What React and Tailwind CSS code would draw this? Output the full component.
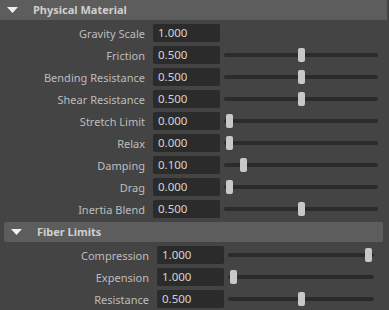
import React from 'react';

const physical = [
  { label: 'Gravity Scale', value: '1.000' },
  { label: 'Friction', value: '0.500', slider: 0.5 },
  { label: 'Bending Resistance', value: '0.500', slider: 0.5 },
  { label: 'Shear Resistance', value: '0.500', slider: 0.5 },
  { label: 'Stretch Limit', value: '0.000', slider: 0 },
  { label: 'Relax', value: '0.000', slider: 0 },
  { label: 'Damping', value: '0.100', slider: 0.1 },
  { label: 'Drag', value: '0.000', slider: 0 },
  { label: 'Inertia Blend', value: '0.500', slider: 0.5 },
];

const fiber = [
  { label: 'Compression', value: '1.000', slider: 1 },
  { label: 'Expension', value: '1.000', slider: 0 },
  { label: 'Resistance', value: '0.500', slider: 0.5 },
];

// Maya-style attribute slider: dark groove with a small pale handle
function Slider({ value }) {
  return (
    <div className="relative flex-1 h-[18px] flex items-center">
      <div className="w-full h-[4px] rounded-full bg-[#2b2b2b]" />
      <div
        className="absolute top-[2px] w-[7px] h-[14px] rounded-[2px] bg-[#c8c8c8]"
        style={{ left: `calc(2px + ${value} * (100% - 11px))` }}
      />
    </div>
  );
}

function Row({ label, value, slider }) {
  return (
    <div className="flex items-center h-[18px]">
      <div className="w-[145px] text-right text-[#bdbdbd] text-[11px] leading-none">{label}</div>
      <div className="ml-[8px] w-[67px] h-[18px] rounded-[2px] bg-[#2b2b2b] flex items-center pl-[5px] text-[11.5px] text-[#d4d4d4]">
        {value}
      </div>
      {slider !== undefined ? (
        <div className="flex-1 flex ml-[4px]">
          <Slider value={slider} />
        </div>
      ) : (
        <div className="flex-1" />
      )}
    </div>
  );
}

function Header({ title, className = '' }) {
  return (
    <div className={`h-[20px] bg-[#5d5d5d] flex items-center ${className}`}>
      <svg width="11" height="6" viewBox="0 0 11 6" className="ml-[7px]">
        <path d="M0 0H11L5.5 6Z" fill="#f0f0f0" />
      </svg>
      <span className="ml-[15px] font-bold text-[11px] text-[#cfcfcf]">{title}</span>
    </div>
  );
}

export default function App() {
  return (
    <div
      className="w-[389px] h-[310px] bg-[#444444] overflow-hidden"
      style={{ fontFamily: '"Noto Sans", "Liberation Sans", sans-serif' }}
    >
      <div className="w-[387px]">
        <Header title="Physical Material" />
        <div className="flex flex-col gap-[4px] pt-[4px] pr-[9px]">
          {physical.map((r) => (
            <Row key={r.label} {...r} />
          ))}
        </div>
        <div className="mx-[4px] mt-[4px]">
          <Header title="Fiber Limits" className="rounded-[2px]" />
          <div className="flex flex-col gap-[4px] pt-[4px] pr-[9px]">
            {fiber.map((r) => (
              <Row key={r.label} {...r} />
            ))}
          </div>
        </div>
      </div>
    </div>
  );
}
